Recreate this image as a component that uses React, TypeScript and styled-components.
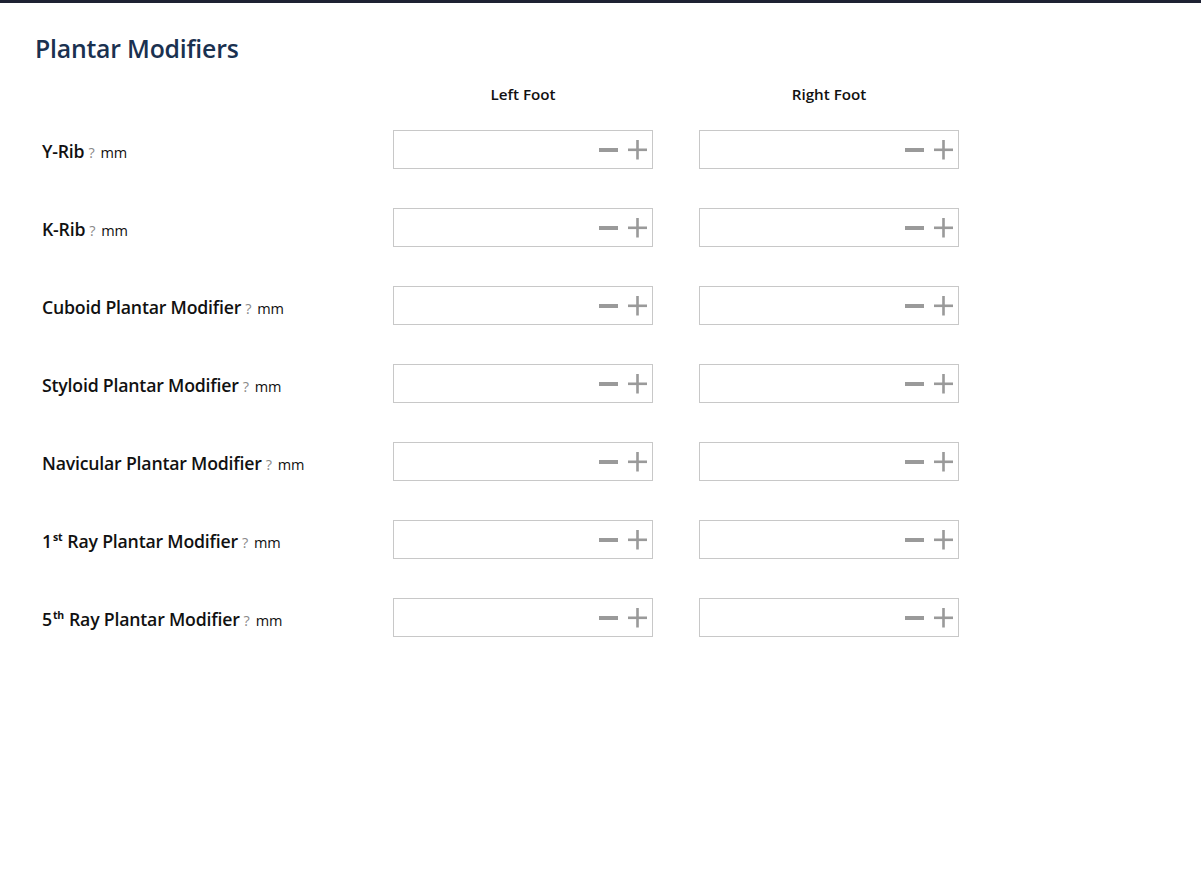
import React from "react";
import styled, { createGlobalStyle } from "styled-components";

const Global = createGlobalStyle`
  html, body { margin: 0; padding: 0; background: #fff; }
  body { font-family: "Open Sans", "Noto Sans", sans-serif; color: #111; }
`;

const Page = styled.div`
  border-top: 3px solid #1e2233;
  min-height: 874px;
  padding: 0 0 0 35px;
`;

const Title = styled.h1`
  margin: 0;
  padding-top: 29px;
  font-size: 24.8px;
  line-height: 32px;
  font-weight: 600;
  color: #1a3150;
  letter-spacing: -0.2px;
`;

const Grid = styled.div`
  display: grid;
  grid-template-columns: 305px 260px 260px;
  column-gap: 46px;
  row-gap: 39px;
  padding-left: 7px;
  margin-top: 20px;
  align-items: center;
`;

const ColHead = styled.div`
  text-align: center;
  font-size: 15.2px;
  font-weight: 600;
  line-height: 20px;
  margin-bottom: -13px;
`;

const Label = styled.div`
  display: flex;
  align-items: baseline;
  white-space: nowrap;
  font-size: 17.7px;
  font-weight: 600;
  color: #111;
  letter-spacing: -0.2px;
  padding-top: 2px;
`;

const Help = styled.span`
  font-size: 14.5px;
  font-weight: 400;
  color: #8a8a8a;
  margin: 0 6px 0 4px;
`;

const Unit = styled.span`
  font-size: 14.5px;
  font-weight: 400;
  color: #111;
`;

const Sup = styled.sup`
  font-size: 10.5px;
  font-weight: 700;
  line-height: 0;
  margin-left: 1px;
  margin-right: 5px;
`;

const Field = styled.div`
  box-sizing: border-box;
  height: 39px;
  border: 1px solid #c8c8c8;
  display: flex;
  align-items: center;
  justify-content: flex-end;
  padding-right: 4px;
  gap: 9px;
`;

const IconBtn = styled.button`
  border: 0;
  background: none;
  padding: 0;
  width: 20px;
  height: 20px;
  display: flex;
  align-items: center;
  justify-content: center;
  cursor: pointer;
`;

const Minus = () => (
  <svg width="20" height="20" viewBox="0 0 20 20">
    <rect x="0" y="8" width="19" height="4" fill="#9a9a9a" />
  </svg>
);
const Plus = () => (
  <svg width="20" height="20" viewBox="0 0 20 20">
    <rect x="0" y="8.5" width="19" height="2.6" fill="#9a9a9a" />
    <rect x="8.2" y="0" width="2.6" height="19.5" fill="#9a9a9a" />
  </svg>
);

const Stepper = () => (
  <Field>
    <IconBtn aria-label="decrease">
      <Minus />
    </IconBtn>
    <IconBtn aria-label="increase">
      <Plus />
    </IconBtn>
  </Field>
);

const rows: React.ReactNode[] = [
  "Y-Rib",
  "K-Rib",
  "Cuboid Plantar Modifier",
  "Styloid Plantar Modifier",
  "Navicular Plantar Modifier",
  <>1<Sup>st</Sup>Ray Plantar Modifier</>,
  <>5<Sup>th</Sup>Ray Plantar Modifier</>,
];

export default function App() {
  return (
    <>
      <Global />
      <Page>
        <Title>Plantar Modifiers</Title>
        <Grid>
          <div />
          <ColHead>Left Foot</ColHead>
          <ColHead>Right Foot</ColHead>
          {rows.map((r, i) => (
            <React.Fragment key={i}>
              <Label>
                <span>{r}</span>
                <Help>?</Help>
                <Unit>mm</Unit>
              </Label>
              <Stepper />
              <Stepper />
            </React.Fragment>
          ))}
        </Grid>
      </Page>
    </>
  );
}
